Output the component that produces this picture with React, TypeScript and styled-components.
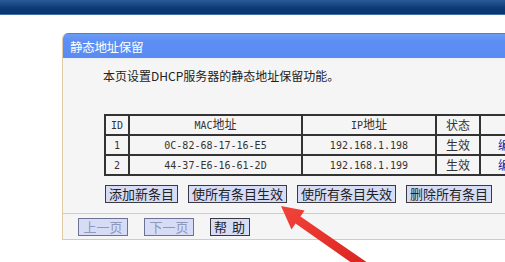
import { FC } from "react"
import styled, { createGlobalStyle } from "styled-components"

const GlobalStyle = createGlobalStyle`
  html, body {
    margin: 0;
    padding: 0;
    background: #ffffff;
    overflow: hidden;
  }
  body {
    font-family: "Noto Sans CJK SC", "Noto Sans", sans-serif;
  }
`

const Page = styled.div`
  position: relative;
  width: 505px;
  height: 262px;
  overflow: hidden;
`

const TopBar = styled.div`
  height: 14px;
  background: linear-gradient(#2a5b97, #0d3b77 55%, #0a346e);
  border-bottom: 1px solid #3f6ea8;
`

const Content = styled.div`
  padding: 18px 0 0 62px;
`

const Panel = styled.div`
  width: 520px;
  background: #f5f5f5;
  border-left: 1px solid #e2c9a6;
  border-radius: 6px 0 0 0;
  overflow: hidden;
`

const TitleBar = styled.div`
  height: 24px;
  display: flex;
  align-items: center;
  padding-left: 7px;
  background: linear-gradient(#6c9cf4, #5c8ef6 30%, #5a8bf3);
  border-top: 1px solid #5a7ec4;
  border-bottom: 2px solid #eaf3fb;
  color: #ffffff;
  font-size: 12.5px;
  letter-spacing: -0.3px;
`

const Body = styled.div`
  padding: 8px 0 0 40px;
`

const Intro = styled.p`
  margin: 0;
  font-size: 12px;
  line-height: 16px;
  color: #222;
`

const Table = styled.table`
  margin-top: 30px;
  margin-left: 1px;
  border: 1px solid #333;
  border-spacing: 0;
  table-layout: fixed;
  color: #333;
`

const Cell = styled.td<{ $w?: number; $link?: boolean }>`
  box-sizing: border-box;
  width: ${(p) => (p.$w ? `${p.$w}px` : "auto")};
  height: 20px;
  padding: 0;
  border: 1px solid #333;
  text-align: center;
  font-family: "Noto Sans CJK SC", sans-serif;
  font-size: 12px;
  line-height: 16px;
  color: ${(p) => (p.$link ? "#1a1aa6" : "#333")};
`

const Mono = styled.span`
  font-family: "DejaVu Sans Mono", "Liberation Mono", monospace;
  font-size: 10px;
  letter-spacing: 0;
`

const ButtonRow = styled.div`
  display: flex;
  gap: 10px;
  padding: 9px 0 10px 2px;
`

const Button = styled.button<{ $disabled?: boolean }>`
  height: 18px;
  padding: 0 3px;
  margin: 0;
  background: #d6dcf6;
  border: 1px solid ${(p) => (p.$disabled ? "#6a7296" : "#3a3a44")};
  border-radius: 0;
  color: ${(p) => (p.$disabled ? "#8f98b8" : "#222")};
  font-family: "Noto Sans CJK SC", sans-serif;
  font-size: 13px;
  line-height: 16px;
  white-space: nowrap;
`

const PagerBar = styled.div`
  display: flex;
  gap: 16px;
  padding: 4px 0 3px 15px;
  border-top: 1px solid #e2c9a6;
  border-bottom: 1px solid #e2c9a6;
`

const PagerButton = styled(Button)<{ $w: number }>`
  width: ${(p) => p.$w}px;
  padding: 0;
  letter-spacing: ${(p) => (p.$disabled ? "0" : "1px")};
`

const Arrow = styled.svg`
  position: absolute;
  left: 0;
  top: 0;
  pointer-events: none;
`

const rows = [
  { id: "1", mac: "0C-82-68-17-16-E5", ip: "192.168.1.198" },
  { id: "2", mac: "44-37-E6-16-61-2D", ip: "192.168.1.199" },
]

const App: FC = () => {
  return (
    <Page>
      <GlobalStyle />
      <TopBar />
      <Content>
        <Panel>
          <TitleBar>静态地址保留</TitleBar>
          <Body>
            <Intro>本页设置DHCP服务器的静态地址保留功能。</Intro>
            <Table>
              <tbody>
                <tr>
                  <Cell $w={24}>
                    <Mono>ID</Mono>
                  </Cell>
                  <Cell $w={173}>
                    <Mono>MAC</Mono>地址
                  </Cell>
                  <Cell $w={134}>
                    <Mono>IP</Mono>地址
                  </Cell>
                  <Cell $w={44}>状态</Cell>
                  <Cell $w={60}>&nbsp;</Cell>
                </tr>
                {rows.map((r) => (
                  <tr key={r.id}>
                    <Cell>
                      <Mono>{r.id}</Mono>
                    </Cell>
                    <Cell>
                      <Mono>{r.mac}</Mono>
                    </Cell>
                    <Cell>
                      <Mono>{r.ip}</Mono>
                    </Cell>
                    <Cell>生效</Cell>
                    <Cell $link>编辑</Cell>
                  </tr>
                ))}
              </tbody>
            </Table>
            <ButtonRow>
              <Button>添加新条目</Button>
              <Button>使所有条目生效</Button>
              <Button>使所有条目失效</Button>
              <Button>删除所有条目</Button>
            </ButtonRow>
          </Body>
          <PagerBar>
            <PagerButton $w={50} $disabled>上一页</PagerButton>
            <PagerButton $w={50} $disabled>下一页</PagerButton>
            <PagerButton $w={40}>帮 助</PagerButton>
          </PagerBar>
        </Panel>
      </Content>
      <Arrow width="505" height="262" viewBox="0 0 505 262">
        <defs>
          <linearGradient id="arrowFill" x1="0" y1="0" x2="1" y2="1">
            <stop offset="0" stopColor="#f2443a" />
            <stop offset="1" stopColor="#d8201e" />
          </linearGradient>
        </defs>
        <polygon
          points="281,206 304.5,210.5 300.5,216.5 373,266.5 367.5,274 295.5,223.5 291.5,229.5"
          fill="url(#arrowFill)"
        />
      </Arrow>
    </Page>
  )
}

export default App
